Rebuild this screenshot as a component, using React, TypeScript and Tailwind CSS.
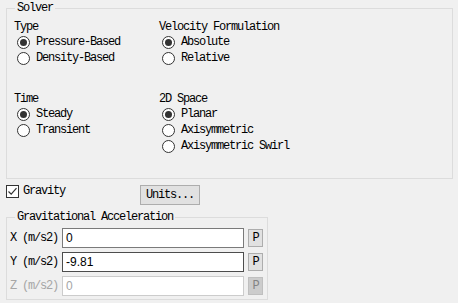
import React from 'react';

const mono = "font-['Liberation_Mono','DejaVu_Sans_Mono',monospace] text-[12px] tracking-[-1.2px]";

const Radio = ({ label, checked }: { label: string; checked?: boolean }) => (
  <div className="flex items-center h-[16px] pl-[3px] gap-[6px]">
    <span className="w-[13px] h-[13px] rounded-full border border-[#333] bg-white flex items-center justify-center shrink-0">
      {checked && <span className="w-[7px] h-[7px] rounded-full bg-[#333]" />}
    </span>
    <span className="leading-[14px] whitespace-nowrap">{label}</span>
  </div>
);

const Group = ({ label, options }: { label: string; options: { name: string; checked?: boolean }[] }) => (
  <div className="flex flex-col">
    <div className="h-[14px] leading-[14px] whitespace-nowrap">{label}</div>
    {options.map((o) => (
      <Radio key={o.name} label={o.name} checked={o.checked} />
    ))}
  </div>
);

const Box = ({ title, className, children }: { title: string; className: string; children: React.ReactNode }) => (
  <div className={`relative border border-[#dcdcdc] ${className}`}>
    <span className="absolute -top-[8px] left-[8px] px-[2px] bg-[#f0f0f0] leading-[14px] whitespace-nowrap">{title}</span>
    {children}
  </div>
);

const AxisRow = ({ axis, value, disabled, border }: { axis: string; value: string; disabled?: boolean; border: string }) => (
  <div className="flex items-center h-[20px]">
    <span className={`w-[52px] leading-[14px] whitespace-nowrap ${disabled ? 'text-[#a6a6a6]' : ''}`}>{axis} (m/s2)</span>
    <div className={`w-[182px] h-[20px] bg-white border ${border} flex items-center pl-[3px] font-['Liberation_Sans',Arial,sans-serif] text-[12px] tracking-normal ${disabled ? 'text-[#a6a6a6]' : 'text-black'}`}>
      {value}
    </div>
    <div
      className={`ml-[4px] w-[15px] h-[18px] border flex items-center justify-center leading-none ${
        disabled ? 'bg-[#cccccc] border-[#bfbfbf] text-[#838383]' : 'bg-[#e1e1e1] border-[#adadad] text-black'
      }`}
    >
      P
    </div>
  </div>
);

export default function App() {
  return (
    <div className={`w-[458px] h-[303px] bg-[#f0f0f0] text-black overflow-hidden pt-[8px] ${mono}`}>
      <Box title="Solver" className="ml-[6px] w-[447px] h-[171px]">
        <div className="grid grid-cols-[145px_1fr] gap-y-[26px] pl-[7px] pt-[11px]">
          <Group label="Type" options={[{ name: 'Pressure-Based', checked: true }, { name: 'Density-Based' }]} />
          <Group label="Velocity Formulation" options={[{ name: 'Absolute', checked: true }, { name: 'Relative' }]} />
          <Group label="Time" options={[{ name: 'Steady', checked: true }, { name: 'Transient' }]} />
          <Group
            label="2D Space"
            options={[{ name: 'Planar', checked: true }, { name: 'Axisymmetric' }, { name: 'Axisymmetric Swirl' }]}
          />
        </div>
      </Box>

      {/* Gravity checkbox + units */}
      <div className="flex items-start mt-[6px] ml-[6px]">
        <div className="flex items-center w-[134px] h-[13px] gap-[4px]">
          <span className="w-[13px] h-[13px] border border-[#333] bg-white flex items-center justify-center shrink-0">
            <svg width="11" height="11" viewBox="0 0 11 11">
              <path d="M1.5 5.5 L4.2 8.2 L9.5 2.2" fill="none" stroke="#333" strokeWidth="1.2" />
            </svg>
          </span>
          <span className="leading-[13px]">Gravity</span>
        </div>
        <div className="w-[60px] h-[20px] bg-[#e1e1e1] border border-[#adadad] flex items-center justify-center leading-none">
          Units...
        </div>
      </div>

      <Box title="Gravitational Acceleration" className="mt-[12px] ml-[6px] w-[262px] h-[83px]">
        <div className="flex flex-col gap-[4px] pl-[3px] pt-[10px]">
          <AxisRow axis="X" value="0" border="border-[#7a7a7a]" />
          <AxisRow axis="Y" value="-9.81" border="border-[#4d4d4d]" />
          <AxisRow axis="Z" value="0" disabled border="border-[#cccccc]" />
        </div>
      </Box>
    </div>
  );
}
